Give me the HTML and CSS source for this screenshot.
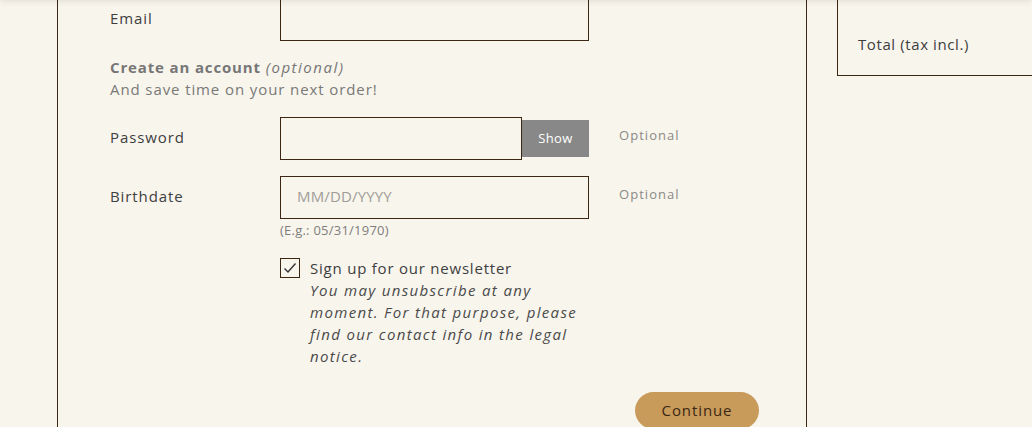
FILE: index.html
```html
<!DOCTYPE html>
<html lang="en">
<head>
<meta charset="utf-8">
<title>Checkout</title>
<link rel="stylesheet" href="styles.css">
</head>
<body>
<div class="top-shadow"></div>
<div class="page">
  <section class="card">
    <form class="form">
      <div class="row">
        <label class="label">Email</label>
        <div class="field"><input class="input" type="email"></div>
        <div class="comment"></div>
      </div>
      <div class="intro">
        <p class="intro-title"><strong>Create an account</strong> <em>(optional)</em></p>
        <p class="intro-sub">And save time on your next order!</p>
      </div>
      <div class="row">
        <label class="label">Password</label>
        <div class="field pw">
          <input class="input pw-input" type="password">
          <button type="button" class="show-btn">Show</button>
        </div>
        <div class="comment">Optional</div>
      </div>
      <div class="row">
        <label class="label">Birthdate</label>
        <div class="field"><input class="input" type="text" placeholder="MM/DD/YYYY"></div>
        <div class="comment">Optional</div>
        <div class="hint">(E.g.: 05/31/1970)</div>
      </div>
      <div class="check-row">
        <span class="checkbox">
          <svg width="14" height="12" viewBox="0 0 14 12"><polyline points="1.5,6.5 5,10 12.5,1.5" fill="none" stroke="#333" stroke-width="1.4"/></svg>
        </span>
        <div class="check-text">
          <div class="check-label">Sign up for our newsletter</div>
          <div class="check-note">You may unsubscribe at any moment. For that purpose, please find our contact info in the legal notice.</div>
        </div>
      </div>
      <div class="footer">
        <button type="button" class="continue">Continue</button>
      </div>
    </form>
  </section>
  <aside class="summary">
    <div class="total">Total (tax incl.)</div>
  </aside>
</div>
</body>
</html>
```

FILE: styles.css
```css
html, body {
  margin: 0;
  padding: 0;
  background: #f8f5ed;
  overflow: hidden;
  height: 427px;
}
body {
  font-family: "Open Sans", "Liberation Sans", sans-serif;
  color: #3e3e3e;
}
.top-shadow {
  position: fixed;
  top: -10px;
  left: 0;
  right: 0;
  height: 10px;
  box-shadow: 0 1px 6px rgba(60, 40, 20, 0.12);
  z-index: 5;
}
.page {
  display: flex;
  gap: 30px;
  margin-top: -2px;
  padding-left: 57px;
}
.card {
  box-sizing: border-box;
  width: 750px;
  flex: none;
  border-left: 1px solid #3b2713;
  border-right: 1px solid #3b2713;
  padding: 0 47px 40px 52px;
}
.form {
  display: flex;
  flex-direction: column;
  gap: 16px;
}
.row {
  display: grid;
  grid-template-columns: 170px 309px 1fr;
  align-items: center;
}
.label {
  font-size: 15px;
  letter-spacing: 0.06em;
  color: #3e3e3e;
  padding-bottom: 4px;
}
.field {
  display: flex;
  align-items: center;
}
.input {
  box-sizing: border-box;
  width: 100%;
  height: 43px;
  border: 1px solid #3b2713;
  background: transparent;
  padding: 0 16px 4px 16px;
  font-family: inherit;
  font-size: 15px;
  color: #333;
  outline: none;
  margin: 0;
}
.input::placeholder {
  color: #a09d98;
  letter-spacing: 0.01em;
}
.pw-input {
  width: 242px;
  flex: none;
}
.show-btn {
  width: 67px;
  height: 37px;
  border: none;
  background: #888888;
  color: #ffffff;
  font-family: inherit;
  font-size: 13px;
  letter-spacing: 0.03em;
  margin: 0;
  padding: 0 0 2px 0;
}
.comment {
  padding-left: 30px;
  font-size: 13px;
  letter-spacing: 0.08em;
  color: #8a8987;
  margin-bottom: 8px;
}
.hint {
  grid-column: 2;
  font-size: 13px;
  line-height: 22px;
  letter-spacing: 0.018em;
  color: #7e7d7b;
}
.intro {
  margin-top: -1px;
  margin-bottom: 1px;
}
.intro p {
  margin: 0;
  line-height: 22px;
  letter-spacing: 0.06em;
}
.intro-title {
  font-size: 15px;
  color: #777676;
}
.intro-title strong {
  font-weight: 700;
  letter-spacing: 0.057em;
}
.intro-title em {
  font-weight: 400;
  letter-spacing: 0.1em;
}
.intro-sub {
  font-size: 15px;
  color: #7a7977;
}
.check-row {
  display: flex;
  gap: 10px;
  margin-left: 170px;
  margin-top: 1px;
}
.checkbox {
  box-sizing: border-box;
  width: 20px;
  height: 20px;
  flex: none;
  border: 1px solid #3b2713;
  display: flex;
  align-items: center;
  justify-content: center;
}
.check-text {
  width: 280px;
  line-height: 22px;
}
.check-label {
  font-size: 15px;
  color: #3e3e3e;
  margin-top: -1px;
  letter-spacing: 0.052em;
}
.check-note {
  font-size: 15px;
  font-style: italic;
  color: #4a4a4a;
  letter-spacing: 0.09em;
}
.footer {
  display: flex;
  justify-content: flex-end;
  margin-top: 9px;
}
.continue {
  width: 124px;
  height: 37px;
  border: none;
  border-radius: 19px;
  background: #c89b5a;
  color: #3b2713;
  font-family: inherit;
  font-size: 15px;
  letter-spacing: 0.06em;
  padding: 0 0 2px 0;
  margin: 0;
}
.summary {
  flex: 1;
  align-self: flex-start;
}
.total {
  border-left: 1px solid #3b2713;
  border-bottom: 1px solid #3b2713;
  padding: 35px 20px 20px 20px;
  line-height: 22px;
  font-size: 15px;
  letter-spacing: 0.04em;
  color: #3e3e3e;
}
```
